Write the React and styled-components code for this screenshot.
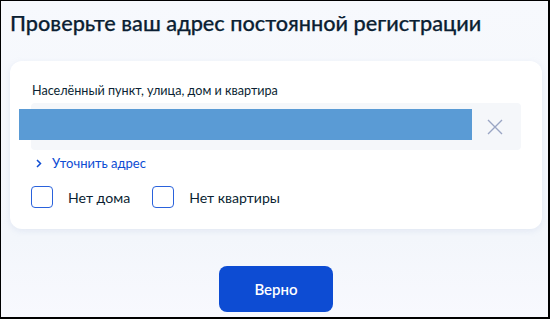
import React from "react";
import styled, { createGlobalStyle } from "styled-components";

const Global = createGlobalStyle`
  html, body { margin: 0; padding: 0; }
  body { font-family: Lato, "Noto Sans", sans-serif; background: #fff; }
  * { box-sizing: border-box; }
`;

const Frame = styled.div`
  width: 550px;
  height: 319px;
  border-style: solid;
  border-color: #000;
  border-width: 1px 2px 2px 1px;
  background: linear-gradient(180deg, #f7f9fd 0%, #f3f6fb 75%, #f8f9fe 100%);
  padding: 0 6px 0 9px;
  display: flex;
  flex-direction: column;
  overflow: hidden;
`;

const Title = styled.h1`
  margin: 9px 0 0 0;
  font-size: 21.7px;
  line-height: 26px;
  font-weight: 500;
  color: #0b1f33;
  letter-spacing: 0;
  -webkit-text-stroke: 0.25px #0b1f33;
`;

const Card = styled.div`
  margin-top: 25px;
  height: 168px;
  background: #fff;
  border-radius: 12px;
  box-shadow: 0 2px 6px rgba(150, 170, 210, 0.18);
  padding: 22px 21px 0 21px;
  display: flex;
  flex-direction: column;
`;

const Label = styled.div`
  font-size: 12.6px;
  line-height: 16px;
  color: #0b1f33;
  padding-left: 1px;
`;

const Field = styled.div`
  position: relative;
  margin-top: 4px;
  height: 47px;
  background: #f5f7fa;
  border-radius: 4px;
  display: flex;
  align-items: center;
  justify-content: flex-end;
  padding-right: 18px;
`;

const Selection = styled.div`
  position: absolute;
  left: -12px;
  top: 6px;
  width: 453px;
  height: 31px;
  background: #5a9bd5;
`;

const Clear = styled.svg`
  width: 16px;
  height: 16px;
  display: block;
`;

const Refine = styled.div`
  margin-top: 5px;
  display: flex;
  align-items: center;
  gap: 10px;
  padding-left: 5px;
  font-size: 13px;
  line-height: 16px;
  color: #0d4cd3;
`;

const Chevron = styled.svg`
  width: 6px;
  height: 9px;
  display: block;
`;

const Options = styled.div`
  margin-top: 15px;
  display: flex;
  align-items: center;
  gap: 22px;
`;

const Option = styled.label`
  display: flex;
  align-items: center;
  gap: 15px;
  font-size: 14.1px;
  color: #0b1f33;
`;

const Box = styled.span`
  width: 22px;
  height: 22px;
  border: 1.5px solid #2a62dc;
  border-radius: 4px;
  background: #fff;
  display: block;
`;

const Footer = styled.div`
  margin-top: 37px;
  display: flex;
  justify-content: center;
`;

const Button = styled.button`
  width: 114px;
  height: 46px;
  border: none;
  border-radius: 8px;
  background: #0d4cd3;
  color: #fff;
  font-family: Lato, "Noto Sans", sans-serif;
  font-size: 15px;
  font-weight: 600;
`;

export default function App() {
  return (
    <>
      <Global />
      <Frame>
        <Title>Проверьте ваш адрес постоянной регистрации</Title>
        <Card>
          <Label>Населённый пункт, улица, дом и квартира</Label>
          <Field>
            <Selection />
            <Clear viewBox="0 0 16 16">
              <path d="M1 1L15 15M15 1L1 15" stroke="#9aa5c4" strokeWidth="1.4" fill="none" />
            </Clear>
          </Field>
          <Refine>
            <Chevron viewBox="0 0 6 9">
              <path d="M1 1L4.5 4.5L1 8" stroke="#0d4cd3" strokeWidth="1.5" fill="none" />
            </Chevron>
            Уточнить адрес
          </Refine>
          <Options>
            <Option><Box />Нет дома</Option>
            <Option><Box />Нет квартиры</Option>
          </Options>
        </Card>
        <Footer>
          <Button>Верно</Button>
        </Footer>
      </Frame>
    </>
  );
}
